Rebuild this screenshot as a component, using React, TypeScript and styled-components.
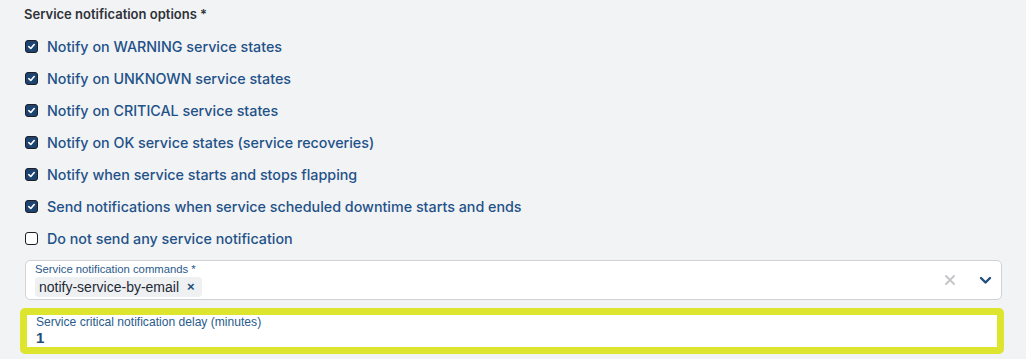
import styled, { createGlobalStyle } from 'styled-components';

const GlobalStyle = createGlobalStyle`
  html, body {
    margin: 0;
    padding: 0;
    background: #f2f3f5;
  }
  body {
    font-family: Inter, "Noto Sans", sans-serif;
  }
`;

const Page = styled.div`
  width: 1026px;
  height: 359px;
  box-sizing: border-box;
  padding: 6px 22px 0 24px;
  overflow: hidden;
`;

const Title = styled.div`
  font-size: 13px;
  font-weight: 600;
  color: #2f3237;
  height: 16px;
  line-height: 16px;
`;

const OptionList = styled.div`
  display: flex;
  flex-direction: column;
  padding-top: 8px;
`;

const OptionRow = styled.label`
  display: flex;
  align-items: center;
  gap: 9px;
  height: 32px;
`;

const Box = styled.span<{ $checked: boolean }>`
  width: 13px;
  height: 13px;
  box-sizing: border-box;
  border-radius: 3px;
  border: 1px solid #1c1f24;
  background: ${(p) => (p.$checked ? '#1d4370' : '#ffffff')};
  display: flex;
  align-items: center;
  justify-content: center;
  flex-shrink: 0;
  margin-left: 1px;
`;

const OptionText = styled.span`
  font-size: 14.3px;
  font-weight: 500;
  color: #1f5288;
`;

const SelectField = styled.div`
  margin-top: 6px;
  margin-left: 1px;
  width: 977px;
  height: 40px;
  box-sizing: border-box;
  background: #ffffff;
  border: 1px solid #cfd2d6;
  border-radius: 5px;
  display: flex;
  align-items: center;
  padding: 0 9px 0 9px;
`;

const FieldBody = styled.div`
  flex: 1;
  display: flex;
  flex-direction: column;
  font-family: "Liberation Sans", Arial, sans-serif;
`;

const SmallLabel = styled.div<{ $size?: number }>`
  font-size: ${(p) => p.$size ?? 11.3}px;
  color: #2a5b8c;
  line-height: 13px;
`;

const Chip = styled.span`
  align-self: flex-start;
  display: inline-flex;
  align-items: center;
  gap: 8px;
  background: #eef0f2;
  border-radius: 4px;
  padding: 1px 7px 1px 4px;
  margin-top: 1px;
  font-size: 14px;
  color: #1f2a36;
  line-height: 18px;
`;

const ChipX = styled.span`
  font-weight: 700;
  font-size: 13px;
  color: #1f4e7a;
`;

const Indicators = styled.div`
  display: flex;
  align-items: center;
  gap: 23px;
`;

const DelayField = styled.div`
  margin-top: 8px;
  margin-left: -4px;
  width: 984px;
  height: 46px;
  box-sizing: border-box;
  border: 7px solid #dde52f;
  border-radius: 5px;
  background: #ffffff;
  padding: 1px 8px 0 9px;
  font-family: "Liberation Sans", Arial, sans-serif;
`;

const DelayValue = styled.div`
  font-size: 15px;
  font-weight: 700;
  color: #1f4e7a;
  line-height: 18px;
`;

const Check = () => (
  <svg width="9" height="9" viewBox="0 0 10 10">
    <path d="M2 5.2 L4.2 7.2 L8 2.8" fill="none" stroke="#fff" strokeWidth="1.8" strokeLinecap="round" strokeLinejoin="round" />
  </svg>
);

const options = [
  { text: 'Notify on WARNING service states', checked: true },
  { text: 'Notify on UNKNOWN service states', checked: true },
  { text: 'Notify on CRITICAL service states', checked: true },
  { text: 'Notify on OK service states (service recoveries)', checked: true },
  { text: 'Notify when service starts and stops flapping', checked: true },
  { text: 'Send notifications when service scheduled downtime starts and ends', checked: true },
  { text: 'Do not send any service notification', checked: false },
];

const App = () => {
  return (
    <Page>
      <GlobalStyle />
      <Title>Service notification options *</Title>
      <OptionList>
        {options.map((o) => (
          <OptionRow key={o.text}>
            <Box $checked={o.checked}>{o.checked && <Check />}</Box>
            <OptionText>{o.text}</OptionText>
          </OptionRow>
        ))}
      </OptionList>
      <SelectField>
        <FieldBody>
          <SmallLabel>Service notification commands *</SmallLabel>
          <Chip>
            notify-service-by-email
            <ChipX>×</ChipX>
          </Chip>
        </FieldBody>
        <Indicators>
          <svg width="12" height="12" viewBox="0 0 12 12">
            <path d="M2 2 L10 10 M10 2 L2 10" stroke="#c4c6c9" strokeWidth="2" strokeLinecap="round" />
          </svg>
          <svg width="13" height="9" viewBox="0 0 13 9">
            <path d="M2 2 L6.5 6.5 L11 2" fill="none" stroke="#1f4e7a" strokeWidth="2.4" strokeLinecap="round" strokeLinejoin="round" />
          </svg>
        </Indicators>
      </SelectField>
      <DelayField>
        <SmallLabel $size={12.1}>Service critical notification delay (minutes)</SmallLabel>
        <DelayValue>1</DelayValue>
      </DelayField>
    </Page>
  );
};

export default App;
